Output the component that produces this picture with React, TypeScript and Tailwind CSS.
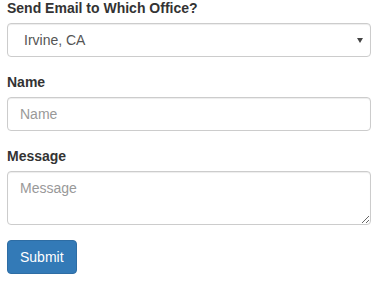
import { useState } from 'react';

const offices = ['Irvine, CA', 'Los Angeles, CA', 'San Diego, CA'];

const App = () => {
  const [office, setOffice] = useState(offices[0]);

  return (
    <form
      className="px-[7px] -mt-[2px] text-[14px] leading-[20px] text-[#333] bg-white"
      style={{ fontFamily: '"Liberation Sans", Arial, Helvetica, sans-serif' }}
      onSubmit={(e) => e.preventDefault()}
    >
      {/* office select */}
      <div className="mb-[15px]">
        <label className="block mb-[5px] font-bold">Send Email to Which Office?</label>
        <div className="relative">
          <select
            value={office}
            onChange={(e) => setOffice(e.target.value)}
            className="block w-full h-[34px] appearance-none rounded-[4px] border border-[#ccc] bg-white pl-[16px] pr-[24px] text-[14px] text-[#555] shadow-[inset_0_1px_1px_rgba(0,0,0,0.075)] outline-none"
          >
            {offices.map((o) => (
              <option key={o}>{o}</option>
            ))}
          </select>
          <span className="pointer-events-none absolute right-[8px] top-[15px] h-0 w-0 border-x-[3px] border-t-[5px] border-x-transparent border-t-[#444]" />
        </div>
      </div>

      {/* name */}
      <div className="mb-[15px]">
        <label className="block mb-[5px] font-bold">Name</label>
        <input
          type="text"
          placeholder="Name"
          className="block w-full h-[34px] rounded-[4px] border border-[#ccc] bg-white px-[12px] py-[6px] text-[14px] text-[#555] placeholder:text-[#999] shadow-[inset_0_1px_1px_rgba(0,0,0,0.075)] outline-none"
        />
      </div>

      {/* message */}
      <div className="mb-[15px]">
        <label className="block mb-[5px] font-bold">Message</label>
        <textarea
          rows={2}
          placeholder="Message"
          className="block w-full h-[54px] rounded-[4px] border border-[#ccc] bg-white px-[12px] py-[6px] text-[14px] leading-[20px] text-[#555] placeholder:text-[#999] shadow-[inset_0_1px_1px_rgba(0,0,0,0.075)] outline-none"
        />
      </div>

      <button
        type="submit"
        className="h-[34px] rounded-[4px] border border-[#2e6da4] bg-[#337ab7] px-[12px] text-[14px] text-white"
      >
        Submit
      </button>
    </form>
  );
};

export default App;
